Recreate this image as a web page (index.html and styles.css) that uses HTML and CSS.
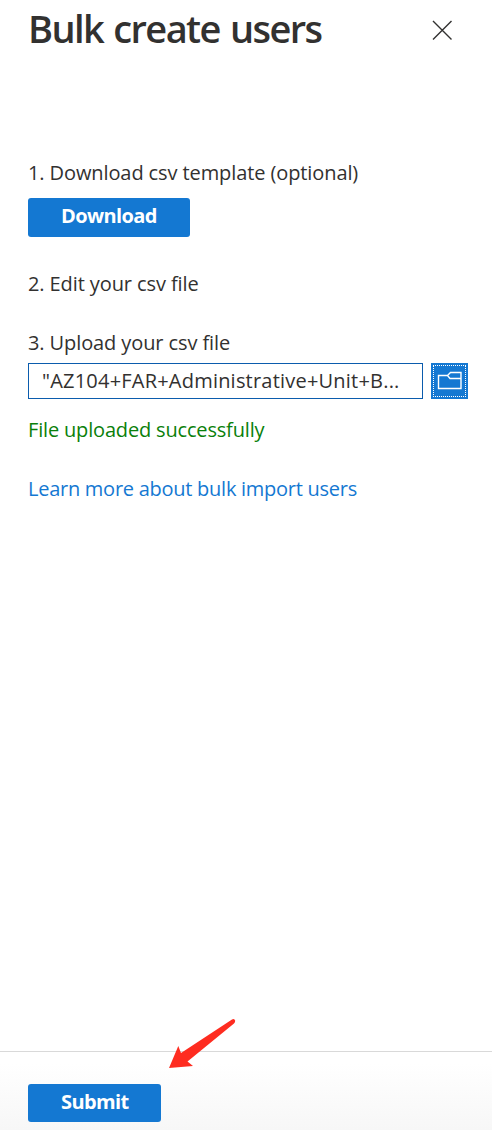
FILE: index.html
```html
<!DOCTYPE html>
<html lang="en">
<head>
<meta charset="utf-8">
<title>Bulk create users</title>
<link rel="stylesheet" href="styles.css">
</head>
<body>
<main class="panel">
  <header class="panel-header">
    <h1 class="title"><span>Bulk create users</span></h1>
    <button class="close" aria-label="Close">
      <svg width="20" height="20" viewBox="0 0 20 20"><path d="M1 1 19.500 19.500M19.500 1 1 19.500" fill="none" stroke="#323130" stroke-width="1.4"/></svg>
    </button>
  </header>
  <div class="content">
    <p class="line step step-download"><span>1. Download csv template (optional)</span></p>
    <button class="primary download"><span>Download</span></button>
    <p class="line step step-edit"><span>2. Edit your csv file</span></p>
    <p class="line step step-upload"><span>3. Upload your csv file</span></p>
    <div class="upload">
      <div class="file-name"><span>"AZ104+FAR+Administrative+Unit+B...</span></div>
      <button class="browse" aria-label="Browse">
        <svg width="25" height="20" viewBox="0 0 25 20"><path d="M10.500 4.500H1.500V17.500H24V1.500H13.500L10.500 4.500 13 7.500H24" fill="none" stroke="#fff" stroke-width="1.4"/></svg>
      </button>
    </div>
    <p class="line success"><span>File uploaded successfully</span></p>
    <a class="line learn"><span>Learn more about bulk import users</span></a>
  </div>
  <footer class="panel-footer">
    <button class="primary submit"><span>Submit</span></button>
    <svg class="arrow" width="70" height="52" viewBox="0 0 70 52"><path d="M2 51 11.300 29 14 36 65 2.400Q67.500 1 68.200 3.800Q68.200 5.300 67 6.500L20.500 44.500 26 49z" fill="#fe2c20"/></svg>
  </footer>
</main>
</body>
</html>
```
FILE: styles.css
```css
* { box-sizing: border-box; }
body {
  margin: 0;
  background: #fff;
  color: #323130;
  font-family: "Open Sans", "Noto Sans", sans-serif;
  font-size: 20px;
}
h1, p { margin: 0; }
button { border: 0; padding: 0; background: none; font: inherit; }
.panel { height: 1130px; display: flex; flex-direction: column; }
.panel-header {
  height: 60px;
  padding: 0 40px 0 28px;
  display: flex;
  justify-content: space-between;
  align-items: flex-start;
}
.title {
  font-size: 38px;
  line-height: 56px;
  font-weight: 600;
  letter-spacing: -1.62px;
  word-spacing: 2px;
  white-space: nowrap;
}
.close { width: 20px; height: 20px; margin-top: 20px; }
.close svg, .browse svg { display: block; }
.content {
  flex: 1;
  padding: 99px 24px 0 28px;
  display: flex;
  flex-direction: column;
  align-items: flex-start;
}
.line { line-height: 28px; white-space: nowrap; }
.step { letter-spacing: -.1px; }
.primary {
  background: #1478d2;
  color: #fff;
  border-radius: 3px;
  font-weight: 700;
  line-height: 36px;
  letter-spacing: -.6px;
  text-align: left;
  padding-left: 33px;
  white-space: nowrap;
}
.download { width: 162px; height: 39px; margin-top: 11px; padding-bottom: 3px; }
.step-edit { margin-top: 33px; }
.step-upload { margin-top: 31px; }
.upload { display: flex; gap: 8px; margin-top: 6px; }
.file-name {
  width: 395px;
  height: 36px;
  border: 1px solid #0b5cad;
  padding-left: 13px;
  line-height: 34px;
  letter-spacing: .21px;
  white-space: nowrap;
}
.browse {
  width: 37px;
  height: 36px;
  background: #1478d2;
  display: flex;
  align-items: center;
  justify-content: center;
  outline: 1px dotted #fff;
  outline-offset: -3px;
}
.success { margin-top: 17px; color: #0a800a; letter-spacing: -.17px; }
.learn { margin-top: 31px; color: #1478d2; letter-spacing: -.26px; }
.panel-footer {
  position: relative;
  height: 79px;
  border-top: 1px solid #d9d9d9;
  padding: 32px 28px 0;
  background: linear-gradient(#fff 15%, #f7f7f7);
}
.submit { display: block; width: 133px; height: 38px; padding-bottom: 2px; }
.arrow { position: absolute; left: 167px; top: -35px; }
```
